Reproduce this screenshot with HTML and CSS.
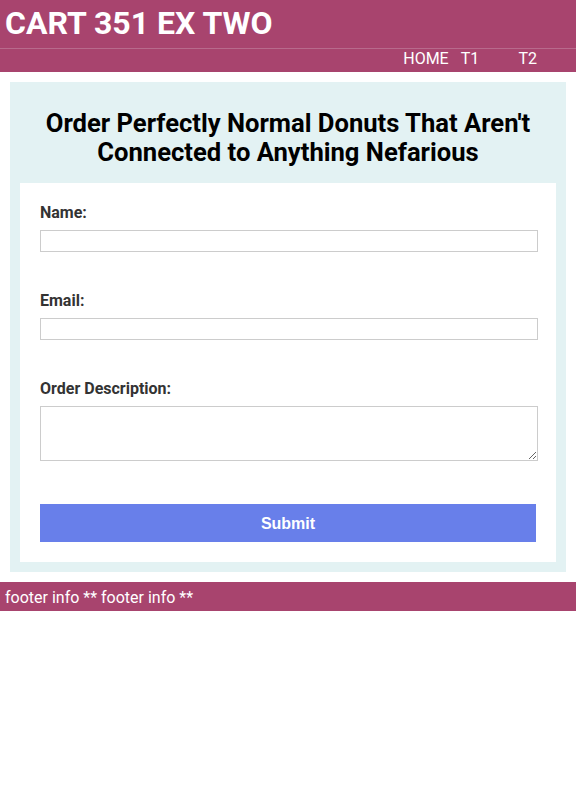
FILE: index.html
```html
<!DOCTYPE html>
<html lang="en">
<head>
<meta charset="utf-8">
<title>CART 351 EX TWO</title>
<link rel="stylesheet" href="styles.css">
</head>
<body>
<header class="site-header">
  <h1 class="site-title">CART 351 EX TWO</h1>
  <nav class="site-nav">
    <a href="#" class="nav-link">HOME</a>
    <a href="#" class="nav-link">T1</a>
    <a href="#" class="nav-link">T2</a>
  </nav>
</header>
<main class="main">
  <h2 class="page-heading">Order Perfectly Normal Donuts That Aren't Connected to Anything Nefarious</h2>
  <form class="order-form">
    <div class="field">
      <label class="field-label" for="name">Name:</label>
      <input class="field-input" id="name" type="text">
    </div>
    <div class="field">
      <label class="field-label" for="email">Email:</label>
      <input class="field-input" id="email" type="text">
    </div>
    <div class="field field-last">
      <label class="field-label" for="desc">Order Description:</label>
      <textarea class="field-textarea" id="desc"></textarea>
    </div>
    <button class="submit-btn" type="button">Submit</button>
  </form>
</main>
<footer class="site-footer">footer info ** footer info **</footer>
</body>
</html>
```
FILE: styles.css
```css
* { box-sizing: border-box; }
html, body { margin: 0; padding: 0; background: #ffffff; }
body { font-family: Roboto, "Liberation Sans", sans-serif; }

.site-header { background: #a8446e; }
.site-title {
  margin: 0;
  height: 49px;
  padding: 4px 0 0 5px;
  font-size: 32px;
  line-height: 38px;
  font-weight: 700;
  color: #ffffff;
  border-bottom: 1px solid #b86a8c;
}
.site-nav {
  display: flex;
  justify-content: flex-end;
  height: 23px;
}
.nav-link {
  width: 10%;
  color: #ffffff;
  text-decoration: none;
  font-size: 16px;
  line-height: 19px;
  padding-top: 0;
}

.main {
  margin: 10px 10px 0;
  background: #e3f2f3;
  padding: 0 10px 10px;
}
.page-heading {
  margin: 0;
  padding: 27px 10px 16px;
  text-align: center;
  font-size: 25.6px;
  line-height: 29px;
  font-weight: 700;
  color: #000000;
}
.order-form {
  background: #ffffff;
  padding: 20px 20px 20px;
  display: flex;
  flex-direction: column;
}
.field { display: flex; flex-direction: column; margin-bottom: 39px; }
.field-last { margin-bottom: 43px; }
.field-label {
  font-size: 16px;
  line-height: 19px;
  font-weight: 700;
  color: #333333;
  margin-bottom: 8px;
}
.field-input {
  display: block;
  width: 498px;
  height: 22px;
  margin: 0;
  padding: 0 3px;
  border: 1px solid #cccccc;
  background: #ffffff;
  font-family: Roboto, sans-serif;
}
.field-textarea {
  display: block;
  width: 498px;
  height: 55px;
  margin: 0;
  padding: 2px 3px;
  border: 1px solid #cccccc;
  font-family: Roboto, sans-serif;
}
.submit-btn {
  width: 100%;
  height: 38px;
  border: 0;
  margin: 0;
  padding-top: 2px;
  background: #687fea;
  color: #ffffff;
  font-family: "Liberation Sans", Arial, sans-serif;
  font-size: 16px;
  font-weight: 700;
}

.site-footer {
  margin-top: 10px;
  background: #a8446e;
  color: #ffffff;
  font-size: 16px;
  line-height: 29px;
  padding: 1px 0 0 5px;
  height: 29px;
}
```
